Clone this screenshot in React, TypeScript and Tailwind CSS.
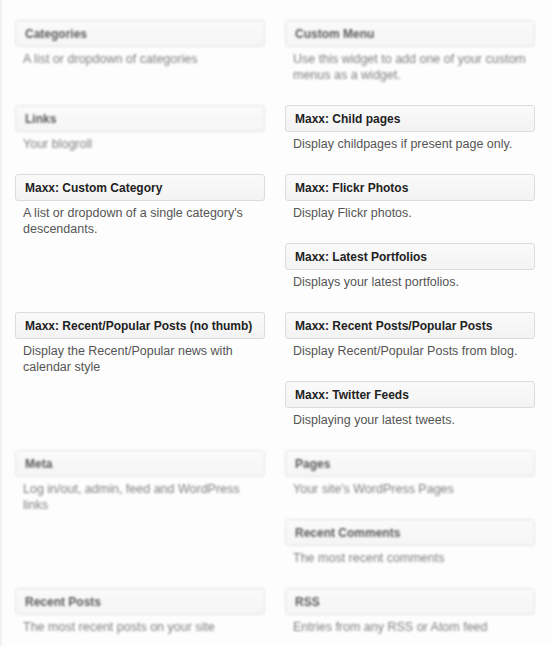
const widgets = [
  { title: "Categories", desc: "A list or dropdown of categories", col: "left", row: 1, faded: true },
  { title: "Custom Menu", desc: "Use this widget to add one of your custom menus as a widget.", col: "right", row: 1, faded: true },
  { title: "Links", desc: "Your blogroll", col: "left", row: 2, faded: true },
  { title: "Maxx: Child pages", desc: "Display childpages if present page only.", col: "right", row: 2 },
  { title: "Maxx: Custom Category", desc: "A list or dropdown of a single category's descendants.", col: "left", row: 3, span: true },
  { title: "Maxx: Flickr Photos", desc: "Display Flickr photos.", col: "right", row: 3 },
  { title: "Maxx: Latest Portfolios", desc: "Displays your latest portfolios.", col: "right", row: 4 },
  { title: "Maxx: Recent/Popular Posts (no thumb)", desc: "Display the Recent/Popular news with calendar style", col: "left", row: 5, span: true },
  { title: "Maxx: Recent Posts/Popular Posts", desc: "Display Recent/Popular Posts from blog.", col: "right", row: 5 },
  { title: "Maxx: Twitter Feeds", desc: "Displaying your latest tweets.", col: "right", row: 6 },
  { title: "Meta", desc: "Log in/out, admin, feed and WordPress links", col: "left", row: 7, span: true, faded: true },
  { title: "Pages", desc: "Your site's WordPress Pages", col: "right", row: 7, faded: true },
  { title: "Recent Comments", desc: "The most recent comments", col: "right", row: 8, faded: true },
  { title: "Recent Posts", desc: "The most recent posts on your site", col: "left", row: 9, faded: true },
  { title: "RSS", desc: "Entries from any RSS or Atom feed", col: "right", row: 9, faded: true },
]

const rowStart: Record<number, string> = {
  1: "row-start-1",
  2: "row-start-2",
  3: "row-start-3",
  4: "row-start-4",
  5: "row-start-5",
  6: "row-start-6",
  7: "row-start-7",
  8: "row-start-8",
  9: "row-start-9",
}

export default function App() {
  return (
    <div className="h-[646px] w-[551px] overflow-hidden bg-[#fdfdfd] border-l-2 border-[#f1f1f1] font-['Liberation_Sans',Arial,sans-serif] antialiased">
      <div className="grid grid-cols-[250px_250px] gap-x-5 pl-[13px] pt-5">
        {widgets.map((w) => (
          <div
            key={w.title}
            className={`${w.col === "left" ? "col-start-1" : "col-start-2"} ${rowStart[w.row]} ${
              w.span ? "row-span-2" : ""
            } pb-[22px] ${w.faded ? "blur-[1px] opacity-75" : ""}`}
          >
            <div className="h-[27px] rounded-[3px] border border-[#dcdcdc] bg-gradient-to-b from-[#fafafa] to-[#f3f3f3] px-[9px] pt-px text-[12px] font-bold leading-[24px] text-[#222] whitespace-nowrap">
              {w.title}
            </div>
            <p className="mt-1 pl-2 pr-2 text-[12.5px] leading-4 text-[#555]">{w.desc}</p>
          </div>
        ))}
      </div>
    </div>
  )
}
